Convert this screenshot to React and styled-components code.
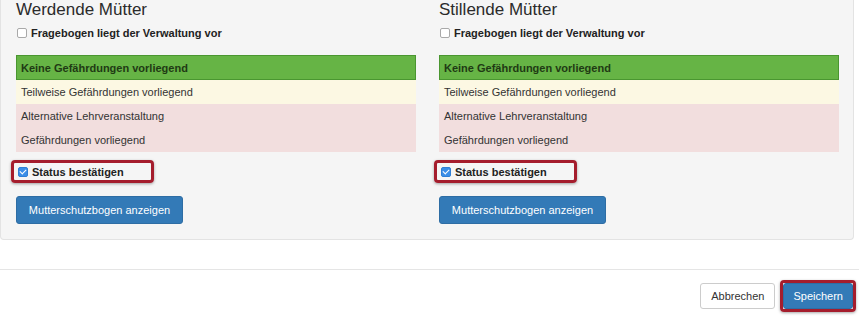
import React from 'react'
import styled, { createGlobalStyle } from 'styled-components'

const GlobalStyle = createGlobalStyle`
    body {
        margin: 0;
        background: #fff;
        font-family: "Liberation Sans", Arial, sans-serif;
        color: #333;
    }
`

// Layout
const Page = styled.div`
    width: 859px;
    height: 319px;
    overflow: hidden;
`

const Well = styled.div`
    width: 854px;
    box-sizing: border-box;
    background: #f5f5f5;
    border: 1px solid #e3e3e3;
    border-top: none;
    border-radius: 0 0 4px 4px;
    padding: 1px 14px 15px 15px;
    display: grid;
    grid-template-columns: 400px 400px;
    column-gap: 23px;
`

const Column = styled.div`
    display: flex;
    flex-direction: column;
`

const Heading = styled.h4`
    margin: 0;
    font-size: 17px;
    line-height: 17px;
    font-weight: 500;
    color: #2b2b2b;
`

const CheckRow = styled.label`
    display: flex;
    align-items: center;
    gap: 4px;
    font-size: 11px;
    font-weight: bold;
    color: #222;
    white-space: nowrap;
    margin: ${p => p.$top}px 0 0 1px;
`

const Box = styled.input.attrs({ type: 'checkbox' })`
    appearance: none;
    margin: 0;
    width: 10px;
    height: 10px;
    border-radius: 2px;
    border: 1px solid ${p => (p.checked ? '#2f7fd6' : '#a9a9a9')};
    background: ${p => (p.checked ? '#3b8ee8' : '#fff')};
    box-sizing: border-box;
    display: grid;
    place-items: center;
    &:checked::after {
        content: '';
        width: 3px;
        height: 5px;
        border: solid #fff;
        border-width: 0 1.5px 1.5px 0;
        transform: translateY(-1px) rotate(45deg);
    }
`

const StatusTable = styled.div`
    margin-top: 16px;
    display: flex;
    flex-direction: column;
`

const StatusRow = styled.div`
    height: ${p => (p.$active ? 25 : 24)}px;
    box-sizing: border-box;
    display: flex;
    align-items: center;
    font-size: 11px;
    background: ${p => p.$bg};
    border: ${p => (p.$active ? '1px solid #4a9630' : 'none')};
    font-weight: ${p => (p.$active ? 'bold' : 'normal')};
    color: ${p => (p.$active ? '#1f3a14' : '#333')};
    padding-left: ${p => (p.$active ? 4 : 5)}px;
`

const Highlight = styled.div`
    align-self: flex-start;
    margin: 8px 0 0 -5px;
    width: 143px;
    height: 23px;
    box-sizing: border-box;
    border: 3px solid #a51d2d;
    border-radius: 4px;
    box-shadow: 0 1px 3px rgba(0, 0, 0, 0.35);
    display: flex;
    align-items: center;
    padding-left: 3px;
`

const Button = styled.button`
    font-family: "Liberation Sans", Arial, sans-serif;
    font-size: 11px;
    border-radius: 3px;
    cursor: pointer;
    box-sizing: border-box;
    white-space: nowrap;
    height: ${p => p.$h}px;
    padding: 0 ${p => p.$px || 11}px;
    border: 1px solid ${p => (p.$primary ? '#2e6da4' : '#ccc')};
    background: ${p => (p.$primary ? '#337ab7' : '#fff')};
    color: ${p => (p.$primary ? '#fff' : '#333')};
`

const ShowButton = styled(Button)`
    align-self: flex-start;
    margin-top: 13px;
    width: 167px;
    padding: 0;
`

const Footer = styled.div`
    margin-top: 29px;
    border-top: 1px solid #e5e5e5;
    display: flex;
    justify-content: flex-end;
    align-items: center;
    gap: 5px;
    padding: 13px 6px 0 0;
`

const SaveFrame = styled.div`
    border: 3px solid #a51d2d;
    border-radius: 4px;
    box-shadow: 0 1px 3px rgba(0, 0, 0, 0.35);
    margin: -3px -3px -3px 0;
    display: flex;
`

const rows = [
    { text: 'Keine Gefährdungen vorliegend', bg: '#66b445', active: true },
    { text: 'Teilweise Gefährdungen vorliegend', bg: '#fcf8e3' },
    { text: 'Alternative Lehrveranstaltung', bg: '#f2dede' },
    { text: 'Gefährdungen vorliegend', bg: '#f2dede' },
]

const Section = ({ title }) => (
    <Column>
        <Heading>{title}</Heading>
        <CheckRow $top={9}>
            <Box defaultChecked={false} />
            Fragebogen liegt der Verwaltung vor
        </CheckRow>
        <StatusTable>
            {rows.map(r => (
                <StatusRow key={r.text} $bg={r.bg} $active={r.active}>{r.text}</StatusRow>
            ))}
        </StatusTable>
        <Highlight>
            <CheckRow $top={0}>
                <Box checked readOnly />
                Status bestätigen
            </CheckRow>
        </Highlight>
        <ShowButton $primary $h={28}>Mutterschutzbogen anzeigen</ShowButton>
    </Column>
)

const App = () => (
    <Page>
        <GlobalStyle />
        <Well>
            <Section title="Werdende Mütter" />
            <Section title="Stillende Mütter" />
        </Well>
        <Footer>
            <Button $h={26} $px={10}>Abbrechen</Button>
            <SaveFrame>
                <Button $primary $h={26} $px={9}>Speichern</Button>
            </SaveFrame>
        </Footer>
    </Page>
)

export default App
